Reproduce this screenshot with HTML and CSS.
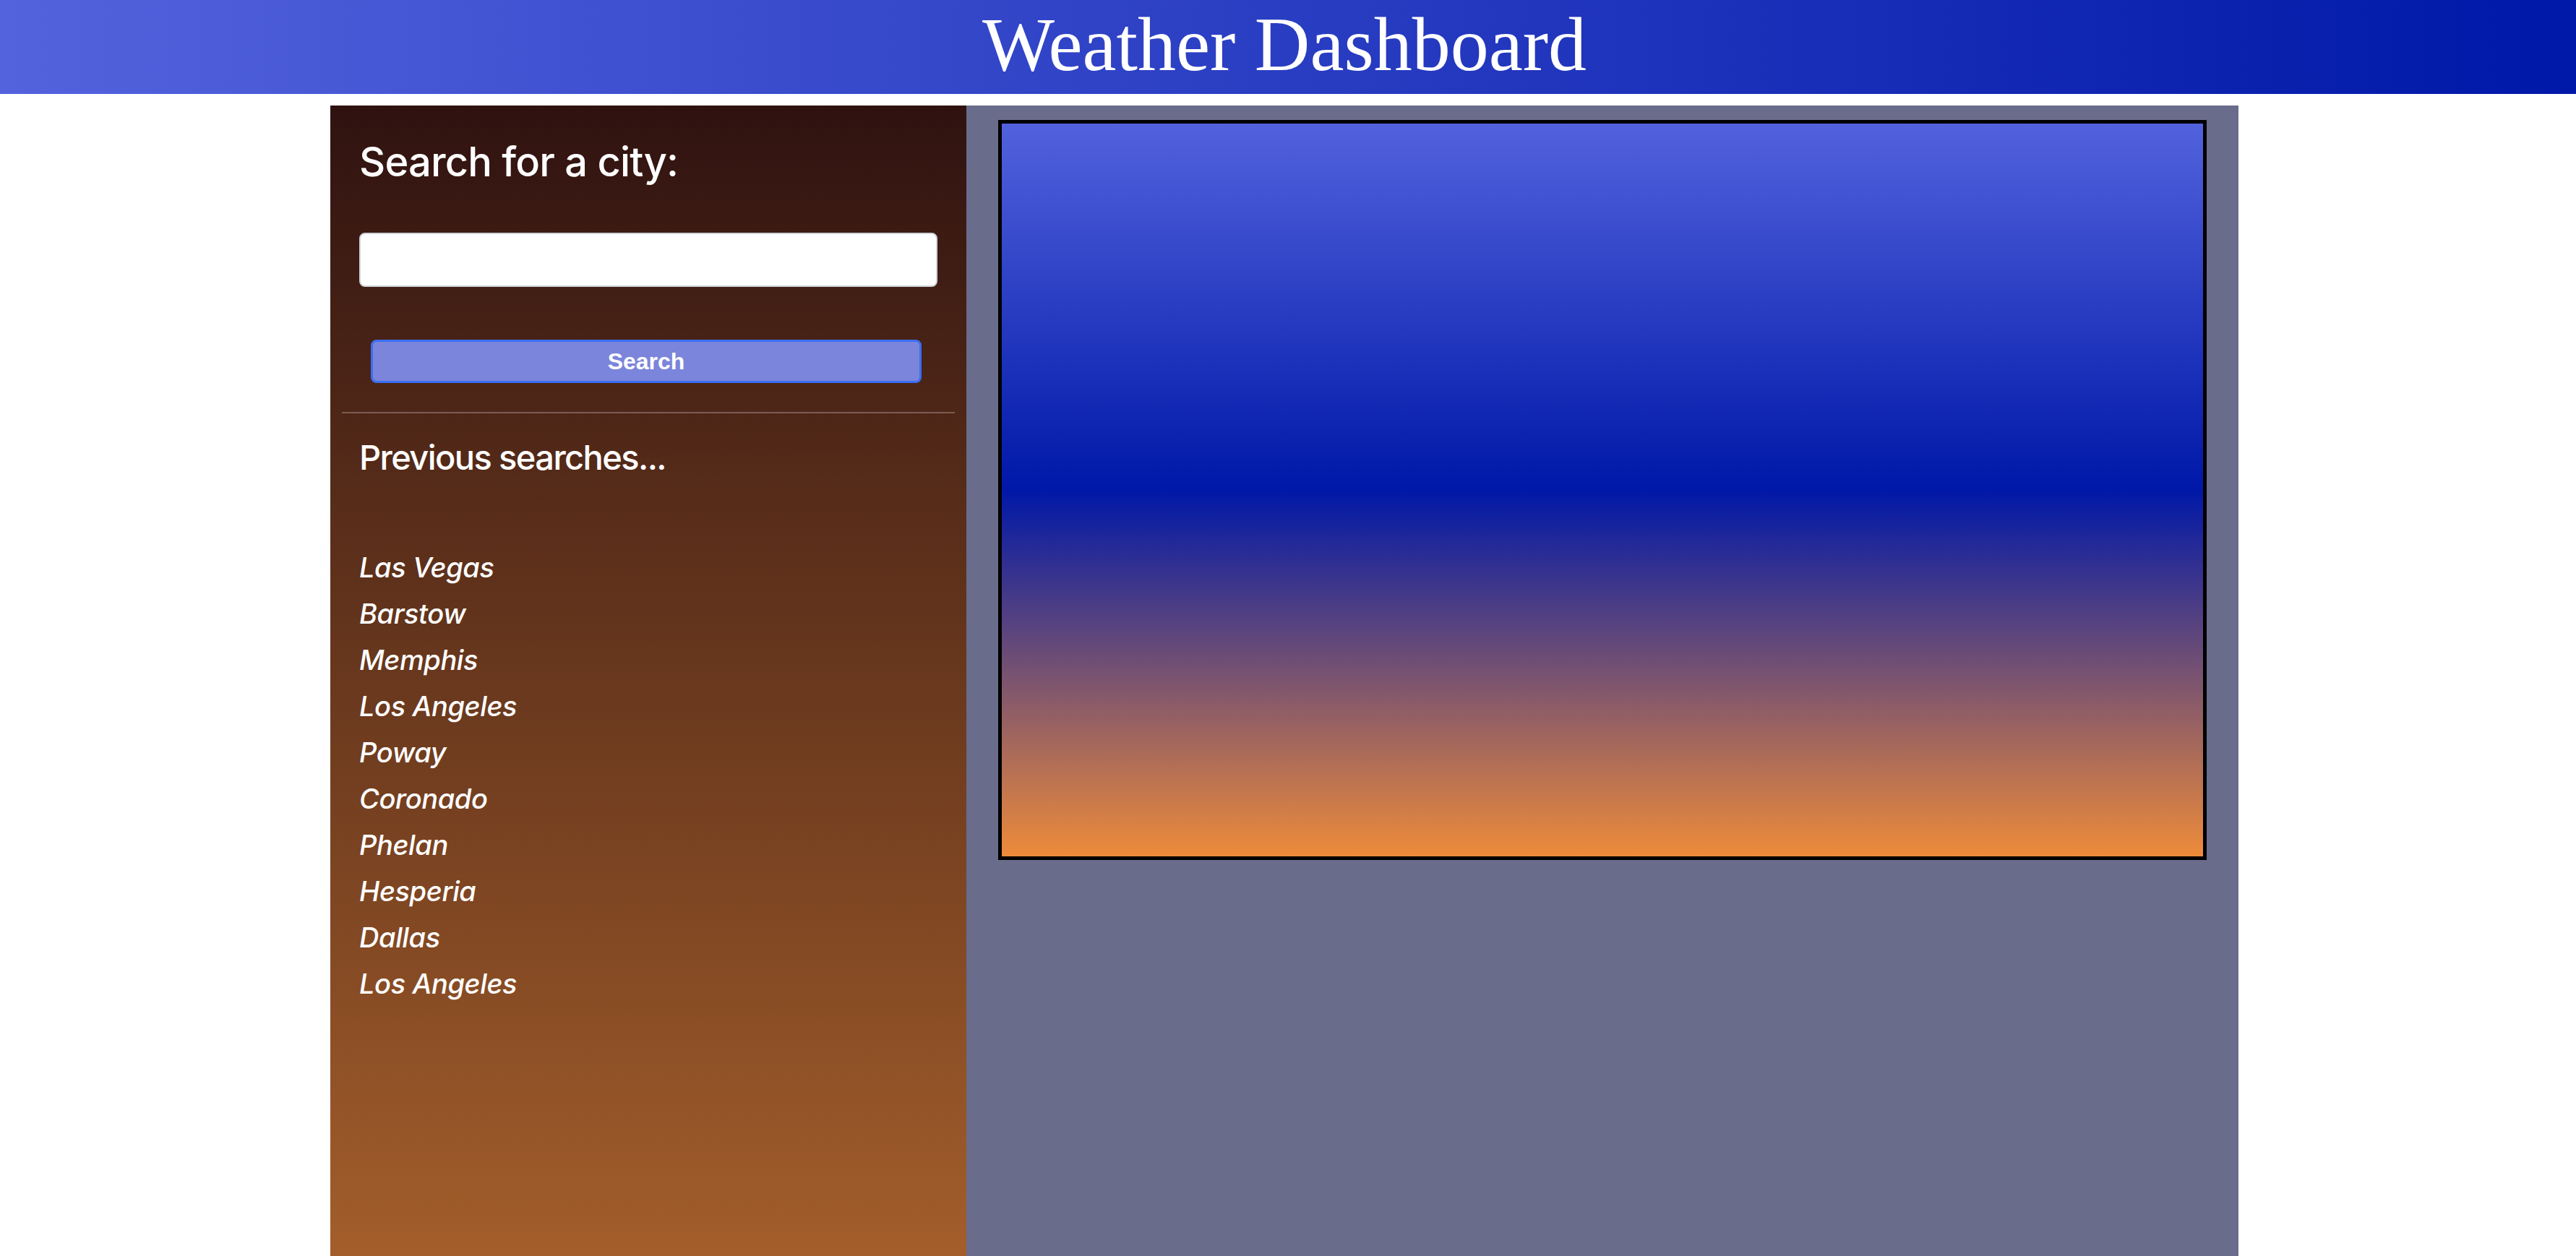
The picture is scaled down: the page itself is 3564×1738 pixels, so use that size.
FILE: index.html
```html
<!DOCTYPE html>
<html lang="en">
<head>
<meta charset="utf-8">
<title>Weather Dashboard</title>
<link rel="stylesheet" href="styles.css">
</head>
<body>
<header class="topbar">
  <h1 class="title">Weather Dashboard</h1>
</header>
<div class="layout">
  <aside class="sidebar">
    <h3 class="search-title">Search for a city:</h3>
    <input class="city-input" type="text" aria-label="City">
    <button class="search-btn" type="button">Search</button>
    <hr class="divider">
    <h4 class="prev-title">Previous searches...</h4>
    <ul class="history">
      <li>Las Vegas</li>
      <li>Barstow</li>
      <li>Memphis</li>
      <li>Los Angeles</li>
      <li>Poway</li>
      <li>Coronado</li>
      <li>Phelan</li>
      <li>Hesperia</li>
      <li>Dallas</li>
      <li>Los Angeles</li>
    </ul>
  </aside>
  <main class="content">
    <div class="sky"></div>
  </main>
</div>
</body>
</html>
```

FILE: styles.css
```css
html, body {
  margin: 0;
  padding: 0;
}
body {
  background: #ffffff;
  font-family: Inter, "Liberation Sans", Arial, sans-serif;
  color: #ffffff;
  overflow: hidden;
}
.topbar {
  height: 130px;
  box-sizing: border-box;
  padding: 0 10px 6px 0;
  background: linear-gradient(to right, #5363dd, #0018a8);
  text-align: center;
}
.title {
  margin: 0;
  font-family: "Liberation Serif", "Times New Roman", serif;
  font-weight: 400;
  font-size: 106px;
  line-height: 124px;
  color: #ffffff;
}
.layout {
  display: flex;
  width: 2640px;
  height: 1592px;
  margin: 16px 0 0 457px;
}
.sidebar {
  width: 880px;
  flex: none;
  box-sizing: border-box;
  padding: 45px 16px 0;
  background: linear-gradient(to bottom, #2f1210, #a35e2b);
  display: flex;
  flex-direction: column;
  align-items: flex-start;
}
.search-title {
  margin: 0 0 0 24px;
  font-size: 56px;
  font-weight: 500;
  line-height: 1.2;
  letter-spacing: -0.8px;
}
.city-input {
  margin: 64px 0 0 24px;
  width: 800px;
  height: 75px;
  box-sizing: border-box;
  border: 2px solid #ced4da;
  border-radius: 8px;
  background: #ffffff;
  padding: 0 20px;
  font-size: 32px;
}
.search-btn {
  margin: 73px 0 0 40px;
  width: 762px;
  height: 60px;
  box-sizing: border-box;
  border: 3px solid #3b6ff2;
  border-radius: 8px;
  background: #7b85db;
  color: #ffffff;
  font-family: "Liberation Sans", Arial, sans-serif;
  font-weight: 700;
  font-size: 32px;
  padding: 0;
}
.divider {
  align-self: stretch;
  margin: 40px 0 0;
  border: 0;
  border-top: 2px solid rgba(255, 255, 255, 0.25);
  height: 0;
}
.prev-title {
  margin: 33px 0 0 24px;
  font-size: 47px;
  font-weight: 500;
  line-height: 1.2;
  letter-spacing: -1.6px;
}
.history {
  list-style: none;
  margin: 91px 0 0 24px;
  padding: 0;
}
.history li {
  font-size: 38px;
  font-style: italic;
  font-weight: 500;
  line-height: 64px;
  letter-spacing: -0.4px;
}
.content {
  flex: 1;
  background: #696c8a;
  padding: 20px 44px 0;
}
.sky {
  height: 1024px;
  box-sizing: border-box;
  border: 5px solid #000000;
  background: linear-gradient(to bottom, #5262dd 0%, #0018a8 50%, #ee8b3a 100%);
}
```
